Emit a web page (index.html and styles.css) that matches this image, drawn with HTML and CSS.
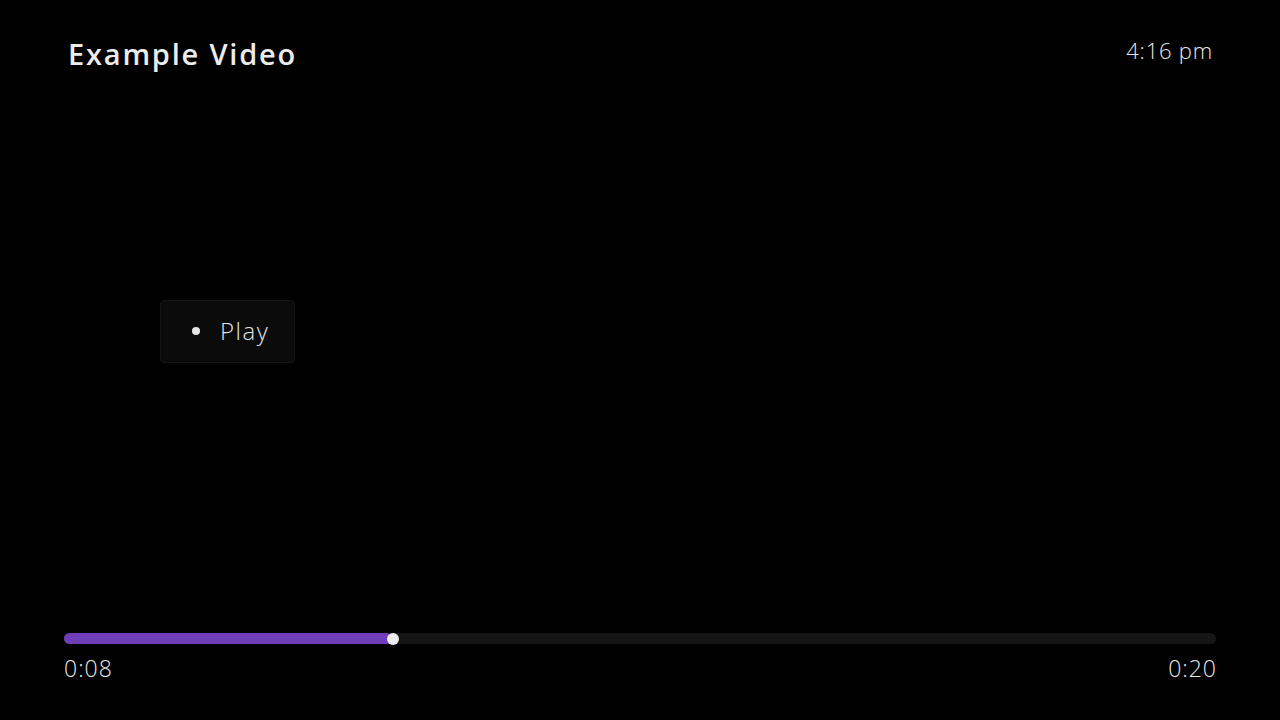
FILE: index.html
```html
<!DOCTYPE html>
<html>
<head>
<meta charset="utf-8">
<link rel="stylesheet" href="styles.css">
</head>
<body>
<div class="screen">
  <header class="top">
    <h1 class="title">Example Video</h1>
    <div class="clock">4:16 pm</div>
  </header>
  <main class="middle">
    <ul class="menu">
      <li class="menu-item">Play</li>
    </ul>
  </main>
  <footer class="bottom">
    <div class="track">
      <div class="fill" style="width: 28.5%"></div>
      <div class="knob"></div>
    </div>
    <div class="times">
      <span>0:08</span>
      <span>0:20</span>
    </div>
  </footer>
</div>
</body>
</html>
```
FILE: styles.css
```css
html, body {
  margin: 0;
  padding: 0;
  background: #000;
}
.screen {
  width: 1280px;
  height: 720px;
  display: flex;
  flex-direction: column;
  font-family: "Open Sans", "Noto Sans", sans-serif;
  color: #e8e8e8;
}
.top {
  display: flex;
  justify-content: space-between;
  align-items: flex-start;
  padding: 34px 68px 0 68px;
}
.title {
  margin: 0;
  font-size: 29px;
  font-weight: 600;
  letter-spacing: 1.8px;
  line-height: 40px;
  color: #ececec;
}
.clock {
  font-size: 22px;
  font-weight: 300;
  letter-spacing: 0.8px;
  line-height: 32px;
  margin-right: -1px;
  color: #e8e8e8;
}
.middle {
  flex: 1;
  padding: 226px 0 0 160px;
}
.menu {
  margin: 0;
  padding: 0 0 0 59px;
  list-style: none;
  width: 74px;
  height: 61px;
  box-sizing: content-box;
  background: #0b0b0b;
  border: 1px solid #151515;
  border-radius: 4px;
}
.menu-item {
  position: relative;
  font-size: 24px;
  font-weight: 300;
  letter-spacing: 1.5px;
  line-height: 59px;
  color: #e2e2e2;
}
.menu-item::before {
  content: "";
  position: absolute;
  left: -28px;
  top: 26px;
  width: 8px;
  height: 8px;
  border-radius: 50%;
  background: #e6e6e6;
}
.bottom {
  padding: 0 64px 38px 64px;
}
.track {
  position: relative;
  height: 11px;
  background: #161616;
  border-radius: 6px;
}
.fill {
  height: 100%;
  background: #6f3db8;
  border-radius: 6px;
}
.knob {
  position: absolute;
  left: calc(28.5% - 5px);
  top: -0.5px;
  width: 12px;
  height: 12px;
  border-radius: 50%;
  background: #ececec;
}
.times {
  display: flex;
  justify-content: space-between;
  margin-top: 10px;
  font-size: 23px;
  font-weight: 300;
  letter-spacing: 1px;
  line-height: 28px;
  color: #e8e8e8;
}
.times span:last-child {
  margin-right: -1px;
}
```
